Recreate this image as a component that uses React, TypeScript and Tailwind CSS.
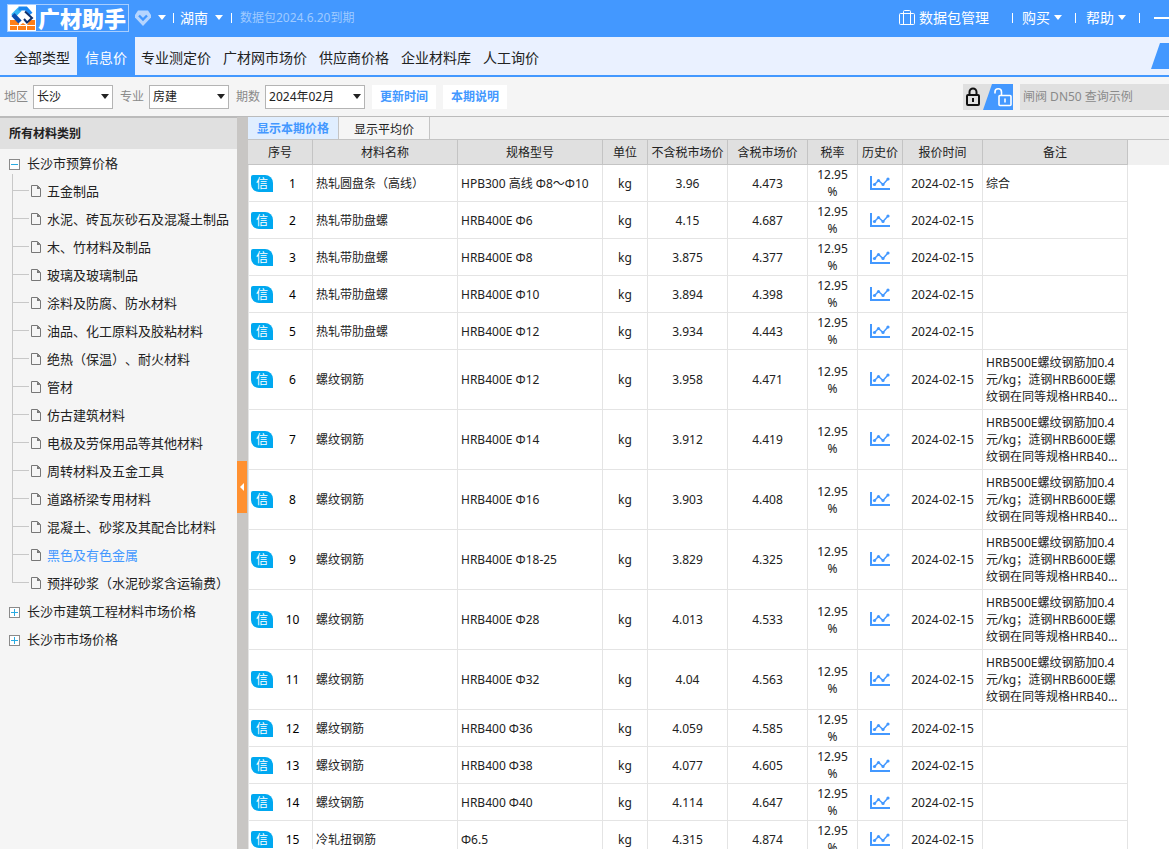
const navItems = [
  "全部类型",
  "信息价",
  "专业测定价",
  "广材网市场价",
  "供应商价格",
  "企业材料库",
  "人工询价",
];

const treeItems = [
  "五金制品",
  "水泥、砖瓦灰砂石及混凝土制品",
  "木、竹材料及制品",
  "玻璃及玻璃制品",
  "涂料及防腐、防水材料",
  "油品、化工原料及胶粘材料",
  "绝热（保温）、耐火材料",
  "管材",
  "仿古建筑材料",
  "电极及劳保用品等其他材料",
  "周转材料及五金工具",
  "道路桥梁专用材料",
  "混凝土、砂浆及其配合比材料",
  "黑色及有色金属",
  "预拌砂浆（水泥砂浆含运输费）",
];

const note = "HRB500E螺纹钢筋加0.4元/kg；涟钢HRB600E螺纹钢在同等规格HRB40...";

const rows = [
  { name: "热轧圆盘条（高线）", spec: "HPB300 高线 Φ8～Φ10", net: "3.96", gross: "4.473", note: "综合" },
  { name: "热轧带肋盘螺", spec: "HRB400E Φ6", net: "4.15", gross: "4.687", note: "" },
  { name: "热轧带肋盘螺", spec: "HRB400E Φ8", net: "3.875", gross: "4.377", note: "" },
  { name: "热轧带肋盘螺", spec: "HRB400E Φ10", net: "3.894", gross: "4.398", note: "" },
  { name: "热轧带肋盘螺", spec: "HRB400E Φ12", net: "3.934", gross: "4.443", note: "" },
  { name: "螺纹钢筋", spec: "HRB400E Φ12", net: "3.958", gross: "4.471", note },
  { name: "螺纹钢筋", spec: "HRB400E Φ14", net: "3.912", gross: "4.419", note },
  { name: "螺纹钢筋", spec: "HRB400E Φ16", net: "3.903", gross: "4.408", note },
  { name: "螺纹钢筋", spec: "HRB400E Φ18-25", net: "3.829", gross: "4.325", note },
  { name: "螺纹钢筋", spec: "HRB400E Φ28", net: "4.013", gross: "4.533", note },
  { name: "螺纹钢筋", spec: "HRB400E Φ32", net: "4.04", gross: "4.563", note },
  { name: "螺纹钢筋", spec: "HRB400 Φ36", net: "4.059", gross: "4.585", note: "" },
  { name: "螺纹钢筋", spec: "HRB400 Φ38", net: "4.077", gross: "4.605", note: "" },
  { name: "螺纹钢筋", spec: "HRB400 Φ40", net: "4.114", gross: "4.647", note: "" },
  { name: "冷轧扭钢筋", spec: "Φ6.5", net: "4.315", gross: "4.874", note: "" },
];

const headers = [
  "序号",
  "材料名称",
  "规格型号",
  "单位",
  "不含税市场价",
  "含税市场价",
  "税率",
  "历史价",
  "报价时间",
  "备注",
];

function Triangle() {
  return (
    <svg width="8" height="5" viewBox="0 0 8 5" fill="currentColor" className="shrink-0" aria-hidden="true">
      <path d="M0 0h8L4 5z" />
    </svg>
  );
}

function Divider() {
  return <span className="h-2.5 w-px bg-white" />;
}

function Logo() {
  return (
    <a href="#" className="flex h-7 w-[122px] items-center border border-[#a8ceff]">
      <svg width="28" height="26" viewBox="0 0 28 26" className="shrink-0" aria-hidden="true">
        <path d="M0 0h28v26H0z" fill="#fff" />
        <path d="M2 15h6l3 3v2H2zM2 21h7v4H2zM10 21h8v4h-8zM19 21h8v4h-8zM12 20l3-2 3 2zM19 20l3-5h5v5z" fill="#ff7f18" />
        <path d="M5 11L12 4" fill="none" stroke="#35b5f5" strokeWidth="5" />
        <path d="M10.500 3.500H18L23 9" fill="none" stroke="#1a86f0" strokeWidth="4" />
        <path d="M5 9.500L12 17" fill="none" stroke="#0b4fb0" strokeWidth="4.500" />
        <path d="M17 6.500L24 13L19 17.500L16 14" fill="none" stroke="#11306b" strokeWidth="2" />
      </svg>
      <span className="pl-0.5 text-[22px] leading-6 font-black whitespace-nowrap text-white">
        广材助手
      </span>
    </a>
  );
}

function TopBar() {
  return (
    <header className="flex h-[37px] shrink-0 items-center justify-between overflow-hidden bg-[#4398ff] pb-0.5 pl-[7px] text-sm text-white">
      <div className="flex items-center">
        <Logo />
        <button className="ml-1.5 flex items-center gap-[7px]" aria-label="会员">
          <svg width="16" height="16" viewBox="0 0 16 16" aria-hidden="true">
            <path d="M3 0.500h10l3 4.500v2.500L8 16L0 7.500V5z" fill="#b5d5ff" />
            <path d="M4 5.500l4 4 4-4" fill="none" stroke="#4398ff" strokeWidth="2.400" />
          </svg>
          <Triangle />
        </button>
        <span className="flex items-center pl-[7px]">
          <Divider />
        </span>
        <button className="flex items-center gap-[7px] px-1.5">
          湖南
          <Triangle />
        </button>
        <span className="flex items-center gap-2 pl-0.5 text-xs text-[#9fcaff]">
          <Divider />
          数据包2024.6.20到期
        </span>
      </div>
      <div className="flex items-center">
        <button className="mr-[23px] flex items-center gap-1">
          <svg width="16" height="16" viewBox="0 0 16 16" fill="none" stroke="currentColor" aria-hidden="true">
            <rect x="0.5" y="3.5" width="15" height="11" rx="1" />
            <path d="M4.500 14.500V1.500q0-1 1-1h5q1 0 1 1V14.500" />
          </svg>
          数据包管理
        </button>
        <Divider />
        <button className="mr-[13px] ml-[9px] flex items-center gap-1">
          购买
          <Triangle />
        </button>
        <Divider />
        <button className="mr-[13px] ml-2.5 flex items-center gap-1">
          帮助
          <Triangle />
        </button>
        <Divider />
        <button className="ml-3.5 flex h-4 w-[15px] items-center" aria-label="最小化">
          <span className="h-0.5 w-full bg-white" />
        </button>
      </div>
    </header>
  );
}

function NavBar() {
  return (
    <nav className="flex h-10 shrink-0 items-stretch justify-between border-b-2 border-[#4398ff] bg-[#eaf1ff] text-sm">
      <div className="flex pl-1.5">
        {navItems.map((item) => (
          <a
            key={item}
            href="#"
            className={
              item === "信息价"
                ? "flex items-center bg-[#4398ff] px-2 pt-[3px] text-white"
                : "flex items-center px-1.5 pt-[3px] first:pr-[7px] first:pl-2"
            }
          >
            {item}
          </a>
        ))}
      </div>
      <svg width="18" height="26" viewBox="0 0 18 26" className="mt-1.5" aria-hidden="true">
        <path d="M9 0h9v26H0z" fill="#4398ff" />
      </svg>
    </nav>
  );
}

function Select({ label, value, className }: { label: string; value: string; className: string }) {
  return (
    <label className="flex items-center gap-[5px] text-[#8a8a8a]">
      {label}
      <span className="relative flex items-center text-[#222]">
        <select
          className={`h-6 appearance-none border border-[#b4b4b4] bg-white pl-[3px] text-xs outline-none ${className}`}
          defaultValue={value}
        >
          <option>{value}</option>
        </select>
        <span className="pointer-events-none absolute right-1">
          <Triangle />
        </span>
      </span>
    </label>
  );
}

function FilterBar() {
  return (
    <div className="flex h-[39px] shrink-0 items-center justify-between bg-[#f5f5f5] pl-1">
      <div className="flex items-center gap-[7px]">
        <Select label="地区" value="长沙" className="w-20" />
        <Select label="专业" value="房建" className="w-20" />
        <Select label="期数" value="2024年02月" className="w-[100px]" />
        <button className="h-6 bg-white px-2 font-bold text-[#4398ff]">更新时间</button>
        <button className="h-6 bg-white px-2 font-bold text-[#4398ff]">本期说明</button>
      </div>
      <div className="flex h-[26px] items-stretch gap-[7px]">
        <button className="flex bg-[#e0e0e0]" aria-label="锁定">
          <svg width="50" height="26" viewBox="0 0 50 26" fill="none" aria-hidden="true">
            <path d="M29 0h21v26H20z" fill="#4398ff" />
            <g stroke="#111" strokeWidth="2">
              <rect x="4" y="11" width="12" height="10" rx="1" />
              <path d="M6.500 11V8a3.500 3.500 0 0 1 7 0v3" />
              <path d="M10 14v4" />
            </g>
            <g stroke="#fff" strokeWidth="1.600">
              <rect x="36" y="11.500" width="12" height="10" rx="1" />
              <path d="M38.500 11V8a3.200 3.200 0 0 0-6.500 0v1.500" />
              <path d="M42 14.500v4" />
            </g>
          </svg>
        </button>
        <input
          className="w-[149px] bg-[#e0e0e0] pl-[3px] outline-none placeholder:text-[#8a8a8a]"
          placeholder="闸阀 DN50 查询示例"
          aria-label="查询"
        />
      </div>
    </div>
  );
}

function ToggleBox({ open }: { open?: boolean }) {
  return (
    <svg width="11" height="28" viewBox="0 0 11 28" fill="none" className="shrink-0" aria-hidden="true">
      <rect x="0.500" y="9.500" width="10" height="10" fill="#fff" stroke="#8a8a8a" />
      <path d={open ? "M2 14.500h7" : "M2 14.500h7M5.500 11v7"} stroke="#29abe2" />
      {open && <path d="M3.500 24v4" stroke="#c8c8c8" />}
    </svg>
  );
}

function TreeLeaf({ label, last }: { label: string; last: boolean }) {
  return (
    <li className="flex h-7 items-center pl-3">
      <span className="flex h-7 w-[17px] shrink-0 flex-col">
        <span className="h-[13px] border-b border-l border-[#c8c8c8]" />
        {!last && <span className="flex-1 border-l border-[#c8c8c8]" />}
      </span>
      <svg width="10" height="12" viewBox="0 0 10 12" className="mr-1.5 mb-0.5 ml-0.5 shrink-0" aria-hidden="true">
        <path d="M0.500 0.500H6.500L9.500 3.500V11.500H0.500z" fill="none" stroke="#777" />
        <path d="M6 0.500V4h3.500z" fill="#777" />
      </svg>
      <a href="#" className={label === "黑色及有色金属" ? "whitespace-nowrap text-[#4398ff]" : "whitespace-nowrap"}>
        {label}
      </a>
    </li>
  );
}

function Sidebar() {
  return (
    <aside className="w-[237px] shrink-0 overflow-hidden border-t border-[#bbb] bg-[#f5f5f5]">
      <h2 className="flex h-[31px] items-center bg-[#e0e0e0] pl-[9px] font-bold">所有材料类别</h2>
      <ul className="pt-px text-[13px] [text-spacing-trim:space-all]">
        <li>
          <a href="#" className="flex h-7 items-center gap-[7px] pl-[9px]">
            <ToggleBox open />
            长沙市预算价格
          </a>
          <ul>
            {treeItems.map((item, i) => (
              <TreeLeaf key={item} label={item} last={i === treeItems.length - 1} />
            ))}
          </ul>
        </li>
        <li>
          <a href="#" className="flex h-7 items-center gap-[7px] pl-[9px]">
            <ToggleBox />
            长沙市建筑工程材料市场价格
          </a>
        </li>
        <li>
          <a href="#" className="flex h-7 items-center gap-[7px] pl-[9px]">
            <ToggleBox />
            长沙市市场价格
          </a>
        </li>
      </ul>
    </aside>
  );
}

function ChartIcon() {
  return (
    <svg width="20" height="15" viewBox="0 0 20 15" fill="none" stroke="#4398ff" aria-hidden="true">
      <path d="M1 0v13h19" strokeWidth="2" />
      <path d="M4.500 8.500L8.500 4.500L13 8.500L18 3" strokeWidth="1.500" />
      <g fill="#4398ff" stroke="none">
        <circle cx="4.500" cy="8.500" r="1.600" />
        <circle cx="8.500" cy="4.500" r="1.600" />
        <circle cx="13" cy="8.500" r="1.600" />
        <circle cx="18" cy="3" r="1.600" />
      </g>
    </svg>
  );
}

function PriceTable() {
  return (
    <table className="w-full table-fixed border-separate border-spacing-0 bg-white leading-[17px]">
      <colgroup>
        <col className="w-[65px]" />
        <col className="w-[145px]" />
        <col className="w-[145px]" />
        <col className="w-[45px]" />
        <col className="w-20" />
        <col className="w-20" />
        <col className="w-[50px]" />
        <col className="w-[45px]" />
        <col className="w-20" />
        <col className="w-[145px]" />
        <col />
      </colgroup>
      <thead>
        <tr>
          {headers.map((header) => (
            <th
              key={header}
              className="h-[26px] border-t border-r border-b border-[#c4c4c4] bg-[#e0e0e0] font-normal whitespace-nowrap"
            >
              {header}
            </th>
          ))}
          <td className="border-t border-[#c4c4c4] bg-[#f0f0f0]" />
        </tr>
      </thead>
      <tbody className="[&_td]:border-r [&_td]:border-b [&_td]:border-[#e4e4e4]">
        {rows.map((row, i) => (
          <tr key={row.spec + row.net} className="text-center">
            <td className="h-[37px] border-l text-black">
              <div className="flex items-center pl-0.5">
                <span className="h-[17px] w-[22px] rounded-tl-xs rounded-tr-lg rounded-bl-lg bg-[#00a8f0] text-white">
                  信
                </span>
                <span className="flex-1">{i + 1}</span>
              </div>
            </td>
            <td className="px-[3px] text-left">{row.name}</td>
            <td className="px-[3px] text-left whitespace-nowrap">{row.spec}</td>
            <td>kg</td>
            <td>{row.net}</td>
            <td>{row.gross}</td>
            <td className="px-1.5">
              12.95
              <wbr />%
            </td>
            <td>
              <button className="flex w-full justify-center" aria-label="历史价">
                <ChartIcon />
              </button>
            </td>
            <td className="whitespace-nowrap">2024-02-15</td>
            <td className="px-[3px] py-1 text-left break-all">{row.note}</td>
          </tr>
        ))}
      </tbody>
    </table>
  );
}

export default function App() {
  return (
    <div
      lang="zh-CN"
      className="flex h-screen flex-col overflow-hidden bg-white font-['Noto_Sans','Noto_Sans_CJK_SC',sans-serif] text-xs text-[#222]"
    >
      <TopBar />
      <NavBar />
      <FilterBar />
      <main className="flex min-h-0 flex-1 border-t border-[#bbb]">
        <Sidebar />
        <div className="flex w-[11px] shrink-0 flex-col justify-center bg-[#c8c6c4] pt-2">
          <button className="flex h-[52px] w-2.5 items-center justify-center bg-[#ff9030]" aria-label="收起">
            <svg width="4" height="8" viewBox="0 0 4 8" aria-hidden="true">
              <path d="M4 0v8L0 4z" fill="#fff" />
            </svg>
          </button>
        </div>
        <section className="min-w-0 flex-1 overflow-hidden">
          <div className="flex h-[22px] bg-[#f1f1f1]">
            <button className="border-r border-[#c4c4c4] bg-[#e0eeff] px-[9px] pt-px font-bold text-[#4398ff]">
              显示本期价格
            </button>
            <button className="border-r border-[#c4c4c4] bg-[#f5f5f5] px-[15px] pt-[3px]">显示平均价</button>
          </div>
          <PriceTable />
        </section>
      </main>
    </div>
  );
}
